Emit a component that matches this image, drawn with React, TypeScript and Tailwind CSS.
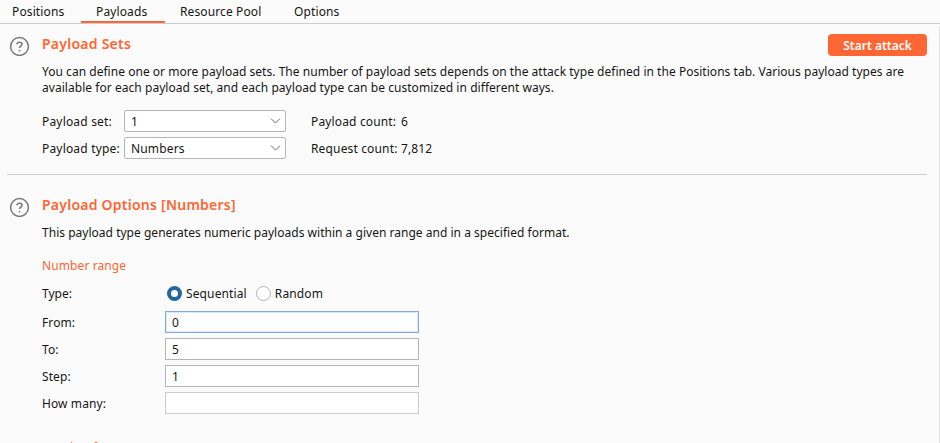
import React from "react";

function HelpIcon() {
  return (
    <svg width="21" height="20" viewBox="0 0 21 20" fill="none" stroke="#787878" className="block shrink-0">
      <circle cx="10.5" cy="10.5" r="8.9" strokeWidth="1.5" />
      <path d="M8 8.3C8.1 7 9 6.2 10.5 6.2s2.5.8 2.5 2c0 1.8-2.5 1.9-2.5 3.8" strokeWidth="1.6" />
      <circle cx="10.5" cy="14.6" r="0.95" fill="#787878" stroke="none" />
    </svg>
  );
}

function Tab({ children, width, active = false }: { children: string; width: string; active?: boolean }) {
  return (
    <div className={`${width} h-[23px] shrink-0 border-b-2 pl-[15px] pt-[4px] tracking-[0.12px] ${active ? "border-[#ff6633]" : "border-transparent"}`}>
      {children}
    </div>
  );
}

function Select({ value }: { value: string }) {
  return (
    <div className="flex h-[22px] w-[162px] items-center justify-between rounded-[2px] border border-[#b8b4b6] bg-white pl-[6px] pr-[4px] tracking-[0.15px]">
      <span className="pt-[2px]">{value}</span>
      <svg width="11" height="6" viewBox="0 0 11 6" fill="none" stroke="#707070">
        <path d="M1 .6 5.5 5.1 10 .6" />
      </svg>
    </div>
  );
}

function Radio({ label, checked = false }: { label: string; checked?: boolean }) {
  return (
    <div className="flex items-center gap-[4px]">
      <span className={`block size-[15px] rounded-full bg-white ${checked ? "border-[4.5px] border-[#2666a0]" : "border border-[#b4b4b4]"}`} />
      <span className="tracking-[0.12px]">{label}</span>
    </div>
  );
}

function Field({ label, value, border }: { label: string; value: string; border: string }) {
  return (
    <div className="flex h-[22px] items-center">
      <span className="w-[123px] pt-[2px] tracking-[0.1px]">{label}</span>
      <div className={`flex h-[22px] w-[254px] items-center border bg-white pt-[2px] pl-[6px] ${border}`}>{value}</div>
    </div>
  );
}

export default function App() {
  return (
    <div className="flex h-[443px] w-[940px] flex-col overflow-hidden bg-[#fbfbfb] font-['Noto_Sans',sans-serif] text-[12px] leading-4 whitespace-nowrap text-[#161616]">
      <nav className="flex h-6 shrink-0 border-b border-[#cdcdcd]">
        <div className="-ml-[3px] flex">
          <Tab width="w-[84px]">Positions</Tab>
          <Tab width="w-[84px]" active>Payloads</Tab>
          <Tab width="w-[114px]">Resource Pool</Tab>
          <Tab width="w-[84px]">Options</Tab>
        </div>
      </nav>
      <main className="mt-[3px] h-[416px] border-r border-[#dedede] pl-[7px] pr-[12px]">
        <section className="flex h-[148px] border-b border-[#cdcdcd] pl-[2px] pt-[7px]">
          <div className="w-[33px] shrink-0 pt-[2px]"><HelpIcon /></div>
          <div className="flex-1">
            <div className="flex h-[22px] justify-between">
              <h2 className="text-[14px] leading-5 font-semibold tracking-[0.25px] text-[#ff6633]">Payload Sets</h2>
              <button className="flex h-[22px] w-[99px] items-center justify-center rounded-[4px] bg-[#ff6633] pt-px text-[12px] font-semibold text-white">Start attack</button>
            </div>
            <p className="mt-[8px] tracking-[0.03px]">
              You can define one or more payload sets. The number of payload sets depends on the attack type defined in the Positions tab. Various payload types are<br />
              <span className="tracking-[0.045px]">available for each payload set, and each payload type can be customized in different ways.</span>
            </p>
            <div className="mt-[14px] grid grid-cols-[82px_187px_90px_auto] gap-y-[5px]">
              <span className="pt-[4px] tracking-[0.18px]">Payload set:</span>
              <Select value="1" />
              <span className="pt-[4px] tracking-[0.15px]">Payload count:</span>
              <span className="pt-[4px]">6</span>
              <span className="pt-[4px] tracking-[0.18px]">Payload type:</span>
              <Select value="Numbers" />
              <span className="pt-[4px] tracking-[0.15px]">Request count:</span>
              <span className="pt-[4px] tracking-[0.1px]">7,812</span>
            </div>
          </div>
        </section>
        <section className="flex pl-[2px] pt-[20px]">
          <div className="w-[33px] shrink-0 pt-[2px]"><HelpIcon /></div>
          <div className="flex-1">
            <h2 className="h-[22px] text-[14px] leading-5 font-semibold tracking-[0.24px] text-[#ff6633]">Payload Options [Numbers]</h2>
            <p className="mt-[8px] tracking-[0.02px]">This payload type generates numeric payloads within a given range and in a specified format.</p>
            <h3 className="mt-[17px] tracking-[0.1px] text-[#ff6633]">Number range</h3>
            <div className="mt-[11px] flex h-[17px] items-center">
              <span className="w-[125px]">Type:</span>
              <div className="flex gap-[9px]">
                <Radio label="Sequential" checked />
                <Radio label="Random" />
              </div>
            </div>
            <div className="mt-[9px] flex flex-col gap-[5px]">
              <Field label="From:" value="0" border="border-[#80acdd] shadow-[inset_0_0_0_1px_#dbe9fa]" />
              <Field label="To:" value="5" border="border-[#b8b4b6]" />
              <Field label="Step:" value="1" border="border-[#b8b4b6]" />
              <Field label="How many:" value="" border="border-[#cdcdcd]" />
            </div>
            <h3 className="mt-[26px] tracking-[0.1px] text-[#ff6633]">Number format</h3>
          </div>
        </section>
      </main>
    </div>
  );
}
